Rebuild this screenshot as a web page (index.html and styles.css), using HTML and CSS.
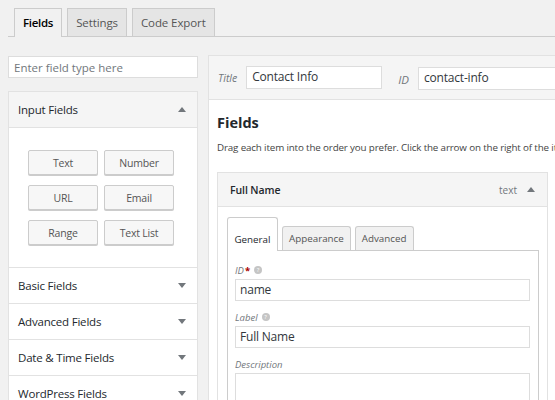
FILE: index.html
```html
<!DOCTYPE html>
<html>
<head>
<meta charset="utf-8">
<link rel="stylesheet" href="styles.css">
</head>
<body>
<div class="page">
  <div class="tabs">
    <div class="tab active">Fields</div>
    <div class="tab">Settings</div>
    <div class="tab">Code Export</div>
  </div>
  <div class="cols">
    <div class="sidebar">
      <input class="search" type="text" placeholder="Enter field type here">
      <div class="groups">
        <div class="group-head open"><span>Input Fields</span><i class="tri up"></i></div>
        <div class="group-body">
          <div class="btns">
            <div class="btn">Text</div>
            <div class="btn">Number</div>
            <div class="btn">URL</div>
            <div class="btn">Email</div>
            <div class="btn">Range</div>
            <div class="btn">Text List</div>
          </div>
        </div>
        <div class="group-head"><span>Basic Fields</span><i class="tri down"></i></div>
        <div class="group-head"><span>Advanced Fields</span><i class="tri down"></i></div>
        <div class="group-head"><span>Date &amp; Time Fields</span><i class="tri down"></i></div>
        <div class="group-head"><span>WordPress Fields</span><i class="tri down"></i></div>
      </div>
    </div>
    <div class="main">
      <div class="main-head">
        <label class="lbl">Title</label>
        <div class="inp title-inp">Contact Info</div>
        <label class="lbl id-lbl">ID</label>
        <div class="inp id-inp">contact-info</div>
      </div>
      <div class="main-body">
        <h2 class="h">Fields</h2>
        <p class="desc">Drag each item into the order you prefer. Click the arrow on the right of the item to reveal additional configuration options.</p>
        <div class="field">
          <div class="field-head"><span class="fname">Full Name</span><span class="ftype">text</span><i class="tri up"></i></div>
          <div class="field-body">
            <div class="itabs">
              <div class="itab active">General</div>
              <div class="itab">Appearance</div>
              <div class="itab">Advanced</div>
            </div>
            <div class="ipanel">
              <div class="flabel">ID<span class="req">*</span><span class="help">?</span></div>
              <div class="finp">name</div>
              <div class="flabel">Label<span class="help">?</span></div>
              <div class="finp">Full Name</div>
              <div class="flabel">Description</div>
              <div class="farea"></div>
            </div>
          </div>
        </div>
      </div>
    </div>
  </div>
</div>
</body>
</html>
```
FILE: styles.css
```css
html, body {
  margin: 0;
  padding: 0;
  background: #f1f1f1;
  font-family: "Open Sans", "Noto Sans", sans-serif;
  color: #444;
  overflow: hidden;
}
.page {
  width: 555px;
  height: 400px;
  overflow: hidden;
}
.tabs {
  display: flex;
  margin: 8px 0 0 8px;
  padding-left: 6px;
  border-bottom: 1px solid #ccc;
  height: 28px;
}
.tab {
  box-sizing: border-box;
  height: 28px;
  margin-right: 5px;
  padding: 0 8px;
  border: 1px solid #ccc;
  border-bottom: none;
  background: #e5e5e5;
  color: #555;
  font-size: 11.5px;
  font-weight: 400;
  line-height: 27px;
  letter-spacing: -0.1px;
}
.tab.active {
  background: #f1f1f1;
  color: #000;
  height: 29px;
  margin-bottom: -1px;
  font-weight: 600;
  letter-spacing: -0.3px;
}
.cols {
  display: flex;
  gap: 10px;
  margin-left: 8px;
}
.sidebar {
  width: 190px;
  flex: none;
  padding-top: 19px;
}
.search {
  display: block;
  box-sizing: border-box;
  width: 190px;
  height: 22px;
  margin: 0;
  padding: 0 5px;
  border: 1px solid #ddd;
  background: #fff;
  font-family: inherit;
  font-size: 11.5px;
  color: #333;
  outline: none;
}
.search::placeholder { color: #72777c; }
.groups {
  margin-top: 13px;
  border: 1px solid #e2e2e2;
  border-bottom: none;
  background: #fff;
}
.group-head {
  display: flex;
  align-items: center;
  justify-content: space-between;
  height: 35px;
  padding: 0 11px 0 9px;
  border-bottom: 1px solid #e2e2e2;
  background: #fff;
  color: #23282d;
  font-size: 11.5px;
  letter-spacing: -0.2px;
}
.group-head.open {
  background: #f5f5f5;
  height: 35px;
}
.group-body {
  height: 140px;
  border-bottom: 1px solid #e2e2e2;
  box-sizing: border-box;
  padding: 22px 0 0 19px;
}
.btns {
  display: grid;
  grid-template-columns: 70px 70px;
  column-gap: 6px;
  row-gap: 10px;
}
.btn {
  box-sizing: border-box;
  height: 25px;
  border: 1px solid #ccc;
  border-radius: 2px;
  background: #f7f7f7;
  box-shadow: 0 1px 0 #ccc;
  text-align: center;
  font-size: 10.5px;
  line-height: 25px;
  color: #555;
  letter-spacing: -0.2px;
}
.tri {
  display: block;
  width: 0;
  height: 0;
  border-left: 4px solid transparent;
  border-right: 4px solid transparent;
}
.tri.up { border-bottom: 5px solid #72777c; }
.tri.down { border-top: 5px solid #72777c; }
.main {
  width: 349px;
  flex: none;
  margin-top: 18px;
  border: 1px solid #e2e2e2;
  background: #fff;
  box-sizing: border-box;
  height: 400px;
}
.main-head {
  display: flex;
  align-items: center;
  height: 43px;
  padding-left: 9px;
  background: #f5f5f5;
  border-bottom: 1px solid #e2e2e2;
  white-space: nowrap;
}
.lbl {
  flex: none;
  font-style: italic;
  color: #72777c;
  font-size: 10.5px;
  margin-right: 9px;
}
.id-lbl {
  margin-left: 16px;
  margin-top: 3px;
  font-size: 11.5px;
}
.inp {
  flex: none;
  box-sizing: border-box;
  height: 23px;
  border: 1px solid #ddd;
  background: #fff;
  font-size: 12px;
  line-height: 20px;
  padding: 0 5px;
  color: #32373c;
  letter-spacing: -0.2px;
}
.title-inp { width: 136px; }
.id-inp { width: 150px; margin-top: 2px; }
.main-body {
  padding: 0 8px;
}
.h {
  margin: 13px 0 0;
  font-size: 14.5px;
  font-weight: 700;
  color: #23282d;
  line-height: 20px;
}
.desc {
  margin: 8px 0 0;
  font-size: 9.8px;
  line-height: 14px;
  color: #444;
  white-space: nowrap;
  letter-spacing: -0.15px;
}
.field {
  margin-top: 17px;
  border: 1px solid #e2e2e2;
  width: 331px;
  box-sizing: border-box;
}
.field-head {
  display: flex;
  align-items: center;
  height: 33px;
  padding: 0 12px 0 12px;
  background: #f5f5f5;
  border-bottom: 1px solid #e2e2e2;
}
.fname {
  flex: 1;
  font-size: 10.5px;
  font-weight: 600;
  color: #23282d;
  letter-spacing: -0.1px;
}
.ftype {
  font-size: 10px;
  color: #72777c;
  margin-right: 10px;
}
.field-body {
  padding: 10px 8px 0 9px;
}
.itabs {
  display: flex;
  height: 33px;
}
.itab {
  box-sizing: border-box;
  height: 24px;
  margin-top: 9px;
  margin-right: 4px;
  padding: 0 6px;
  border: 1px solid #ccc;
  border-bottom: none;
  border-radius: 3px 3px 0 0;
  background: #f1f1f1;
  font-size: 9.8px;
  line-height: 24px;
  color: #555;
}
.itab.active {
  background: #fff;
  color: #23282d;
  height: 34px;
  margin-top: 0;
  line-height: 44px;
  margin-bottom: -1px;
  position: relative;
  z-index: 1;
  width: 51px;
  text-align: center;
  padding: 0;
}
.ipanel {
  border: 1px solid #ccc;
  background: #fff;
  padding: 12px 8px 0 7px;
  height: 200px;
}
.flabel {
  display: flex;
  align-items: center;
  font-style: italic;
  font-size: 9.5px;
  color: #72777c;
  height: 14px;
  margin-bottom: 2px;
}
.req { color: #a00; font-style: normal; font-weight: 700; margin-left: 1px; }
.help {
  display: inline-block;
  width: 8px;
  height: 8px;
  border-radius: 50%;
  background: #c5c5c5;
  color: #fff;
  font-size: 6px;
  font-style: normal;
  line-height: 8px;
  text-align: center;
  margin-left: 4px;
}
.finp {
  box-sizing: border-box;
  height: 22px;
  border: 1px solid #ddd;
  font-size: 12px;
  line-height: 20px;
  padding: 0 4px;
  color: #32373c;
  margin-bottom: 9px;
  letter-spacing: -0.2px;
}
.farea {
  box-sizing: border-box;
  height: 60px;
  border: 1px solid #ddd;
}
```
